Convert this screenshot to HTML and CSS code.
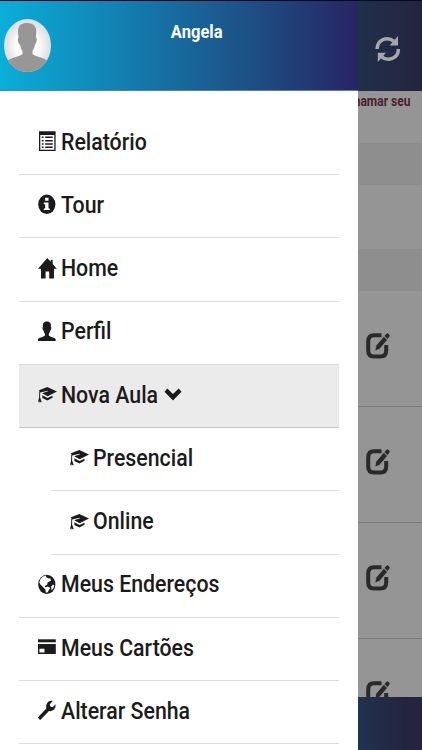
FILE: index.html
```
<!DOCTYPE html>
<html lang="pt-BR">
<head>
<meta charset="utf-8">
<title>Menu</title>
<link rel="stylesheet" href="styles.css">
</head>
<body>
<svg class="defs" aria-hidden="true">
  <symbol id="cap" viewBox="0 0 20 22"><path d="M10.3 4 20 8.6 10.6 13.3 5.2 10.2 11 8.3 10.7 7.7 3.2 9.6 3.1 14.4 4.8 19.2 3.5 18.7 2.9 20.2 2.4 18.3 1 19.2 2.1 14.4 2.3 8.3 2 7.2Z"/><path d="M5.4 12.3 10.5 15.1 15.5 12.8V14.8L10.4 17.5 5.3 14.9Z"/></symbol>
  <symbol id="edit" viewBox="0 0 26 28"><path d="M16.500 3.200H9Q3.200 3.200 3.200 9.500V18.500Q3.200 24.500 9 24.500H15.500Q21.200 24.500 21.200 18.500V13" fill="none" stroke="currentColor" stroke-width="4"/><path d="M9.800 19 11 13.400 18.800 4.300 22.400 8 14.600 17.200Z" stroke="#959595" stroke-width=".8"/><path d="M19.600 3.900 21.400 1.800Q22.200 .9 23.300 1.800L24.300 2.800Q25.200 3.800 24.300 4.800L22.500 7Z"/></symbol>
</svg>
<div class="screen">
  <main class="app">
    <header class="app-header">
      <svg class="refresh" viewBox="0 0 26 28"><path d="M2.100 14C2.100 4.500 12.500 1 18.800 6.200M23.400 14C23.400 23.500 13 27 6.700 21.800" fill="none" stroke="currentColor" stroke-width="3.500"/><path d="M23 1V10.500H14.600ZM2.800 27V17.700H11Z"/></svg>
    </header>
    <p class="notice"><span>chamar seu</span></p>
    <div class="band"></div>
    <div class="gap"></div>
    <div class="band"></div>
    <div class="row"><svg><use href="#edit"/></svg></div>
    <div class="row"><svg><use href="#edit"/></svg></div>
    <div class="row"><svg><use href="#edit"/></svg></div>
    <div class="row last"><svg><use href="#edit"/></svg></div>
    <footer class="app-footer"></footer>
  </main>
  <aside class="drawer">
    <header class="profile">
      <svg class="avatar" viewBox="0 0 47 53">
        <defs><clipPath id="oval"><ellipse cx="23.500" cy="26.500" rx="23.500" ry="26.500"/></clipPath><radialGradient id="halo"><stop offset=".45" stop-color="#fff"/><stop offset="1" stop-color="#dcdcdc"/></radialGradient></defs>
        <g clip-path="url(#oval)"><path fill="url(#halo)" d="M0 0H47V53H0Z"/><path fill="#979797" d="M14.500 18C13.500 11 14 7.500 17 5.500 19.500 3.500 28 3 31 7.500 33 10 32.200 15 32 18 33.500 20 32.300 25 30.800 26 30.500 29 29.500 30.500 28.500 32V35C32 38 39 38 44 42V53H3V42C8 38 15 38 18.500 35V32C17 30.500 16.500 28 16.200 26 14.500 25.500 13 20 14.500 18Z"/></g>
      </svg>
      <h1 class="name"><span>Angela</span></h1>
    </header>
    <nav class="menu">
      <a class="item"><svg viewBox="0 0 20 22"><path fill-rule="evenodd" d="M2 1.200H18.600V21H2ZM3.300 5V19.700H17.300V5Z"/><path d="M4.800 6.500h1.800v1.500H4.800zM4.800 9.900h1.800v1.500H4.800zM4.800 13.200h1.800v1.500H4.800zM4.800 16.500h1.800v1.500H4.800zM8.200 6.500h7.500v1.500H8.200zM8.200 9.900h7.500v1.500H8.200zM8.200 13.200h7.500v1.500H8.200zM8.200 16.500h7.500v1.500H8.200z"/></svg><span class="label">Relatório</span></a>
      <a class="item"><svg viewBox="0 0 20 22"><ellipse cx="9.800" cy="11.300" rx="8.600" ry="9.700"/><path fill="#fff" d="M8.100 4.700h3.400v3.100H8.100zM6.800 9.500h4.700v6h1.300v1.600H6.800v-1.600h1.400v-4.300H6.800z"/></svg><span class="label">Tour</span></a>
      <a class="item"><svg viewBox="0 0 20 22"><path d="M10.300 1 13.700 4.800V2.800H15.700V7L19.800 11.700H17V21.500H12.200V14.500H8.600V21.500H4V11.700H1Z"/></svg><span class="label">Home</span></a>
      <a class="item"><svg viewBox="0 0 20 22"><path d="M5.900 6.500C5.400 3.500 7 1.500 9.900 1.500S14.500 3.500 13.900 6.500C15 8 13.800 10.200 13.300 10.600 12.900 12.500 12.200 13.300 11.800 14V15.500C13 17.300 18.700 17.500 18.700 19.500V21H1V19.500C1 17.500 6.800 17.300 8 15.500V14C7.500 13.300 6.900 12.500 6.500 10.600 5.900 10 5 8 5.900 6.500Z"/></svg><span class="label">Perfil</span></a>
      <a class="item active"><svg><use href="#cap"/></svg><span class="label">Nova Aula</span><svg class="chevron" viewBox="0 0 18 13"><path d="M3.300 .5 9 5.900 14.700 .5 17.500 3.700 9 12.500 .5 3.700Z"/></svg></a>
      <div class="submenu">
        <a class="item"><svg><use href="#cap"/></svg><span class="label">Presencial</span></a>
        <a class="item"><svg><use href="#cap"/></svg><span class="label">Online</span></a>
      </div>
      <a class="item"><svg viewBox="0 0 20 22"><ellipse cx="9.800" cy="11.400" rx="8.600" ry="9.700"/><path fill="#fff" d="M5.400 3.800 9 2.600 9.200 4.300 11.800 5.500 13.200 5.200 14 7.700 12.200 8.500 10.500 9.700 10 12 8.300 12.400 7.800 14.500 10.800 13.500 13.300 15 11.800 17.300 10.600 19.600 8.800 19.500 8.500 16.800 6.200 14.200 3.600 11.800 2.300 9.500Q2.800 5.800 5.400 3.800ZM14.100 13.600 16 11.500 17.300 12.500Q17 15.500 14.600 17.500Z"/></svg><span class="label">Meus Endereços</span></a>
      <a class="item"><svg viewBox="0 0 20 22"><path d="M1 3.300H18.800V6.300H1Z"/><path fill-rule="evenodd" d="M1 8H18.800V18H1ZM2.400 12.700V16.500H7.500V12.700Z"/></svg><span class="label">Meus Cartões</span></a>
      <a class="item"><svg viewBox="0 0 20 22"><path d="M1 18.300 9.300 9.500C8.500 5 11 1.300 15.800 1.900L12.800 5.200 13.400 7.600 15.600 8.200 18.600 5.300C18.900 10 15.800 12.800 12 12L3.300 21Q1.500 20 1 18.300Z"/></svg><span class="label">Alterar Senha</span></a>
    </nav>
  </aside>
</div>
</body>
</html>
```
FILE: styles.css
```
* { box-sizing: border-box; }
body { margin: 0; font-family: Roboto, sans-serif; color: #1b1b1b; }
svg { display: block; fill: currentColor; }
.defs { position: absolute; width: 0; height: 0; }
.screen { position: relative; width: 422px; height: 750px; overflow: hidden; background: #959595; border-top: 1px solid #020a20; }

.app { display: flex; flex-direction: column; height: 100%; padding-left: 320px; }
.app-header { flex: none; height: 90px; display: flex; justify-content: flex-end; padding: 33.500px 21px 0 0; background: linear-gradient(90deg, #20304b 38%, #25233f); color: #a6a7a9; }
.refresh { width: 26px; height: 28px; }
.notice { flex: none; height: 52px; margin: 0; padding: 2px 12px 0 0; text-align: right; font-size: 13.800px; line-height: 16px; font-weight: 700; color: #48212f; white-space: nowrap; }
.notice span { display: inline-block; transform: scaleX(.87); transform-origin: right; }
.band { flex: none; height: 42px; background: #8e8e8e; }
.gap { flex: none; height: 64px; }
.row { flex: none; height: 116px; padding: 41px 31px 0 0; display: flex; justify-content: flex-end; border-bottom: 1px solid #7c7c7c; color: #292929; }
.row svg { width: 26px; height: 28px; }
.row.last { height: 58px; border: 0; overflow: hidden; }
.app-footer { flex: 1; background: linear-gradient(90deg, #20334f 38%, #25233f 85%); }

.drawer { position: absolute; left: 0; top: 0; width: 357.500px; height: 749px; background: #fff; }
.profile { display: grid; grid-template-columns: 47px 1fr; height: 90px; padding: 18px 4px 0; border-bottom: 1px solid #5c7ba6; background: linear-gradient(90deg, #0aafd8, #1281b2 33%, #1c5388 67%, #272563); }
.avatar { width: 47px; height: 53px; }
.name { margin: 0; padding-right: 11px; text-align: center; color: #fff; font-size: 19px; font-weight: 700; line-height: 26px; }
.name span { display: inline-block; transform: scaleX(.87); }
.menu { padding: 20.800px 19px 0; }
.item { display: flex; height: 63.250px; padding: 18.300px 0 0 18px; border-bottom: 1.500px solid #dcdcdc; }
.item svg { flex: none; width: 20px; height: 22px; }
.label { margin: -.5px 0 0 4px; font-size: 24.500px; line-height: 23px; font-weight: 500; white-space: nowrap; transform: scaleX(.87); transform-origin: left; }
.active { position: relative; background: #ebebeb; border-color: #c8c8c8; }
.item .chevron { position: absolute; left: 145px; top: 23.500px; width: 18px; height: 13px; }
.submenu { padding-left: 32px; }
```
